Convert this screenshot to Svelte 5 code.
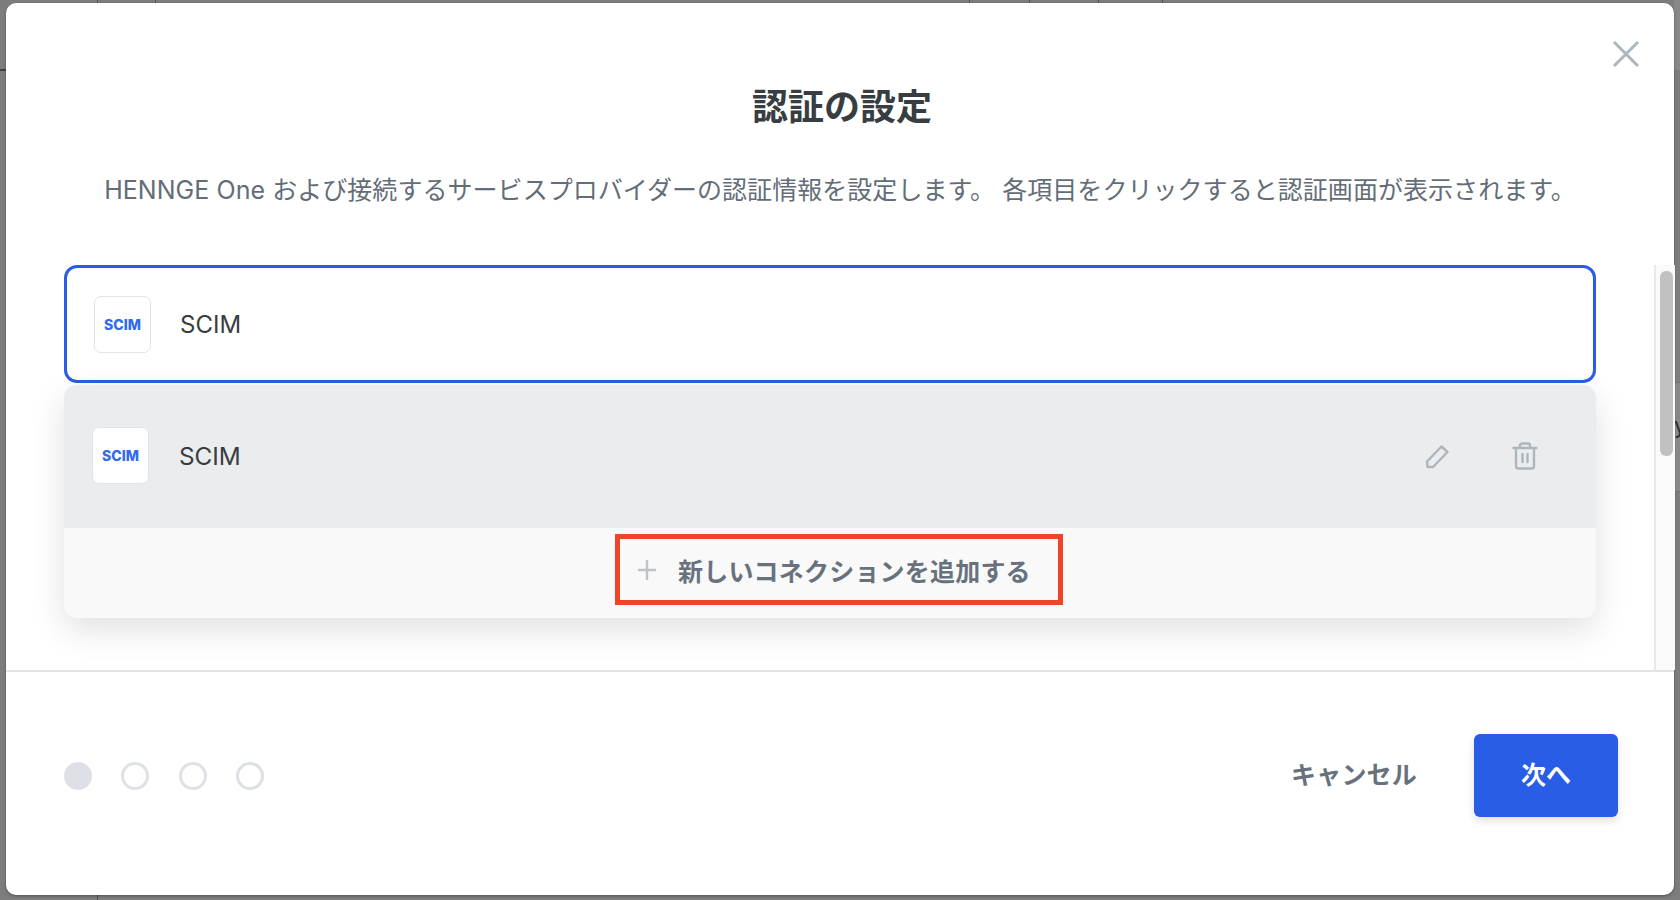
<script lang="ts">
  const dots = [true, false, false, false]
  const ticks = [97, 155, 969, 1029, 1098, 1162]
</script>

<div class="page">
  <div class="backdrop" aria-hidden="true">
    <span class="bg-line bg-line--left"></span>
    {#each ticks as x}
      <span class="bg-tick" style="left: {x}px"></span>
    {/each}
    <span class="bg-tick bg-tick--bottom"></span>
    <span class="bg-edge bg-edge--top"></span>
    <span class="bg-edge bg-edge--mid"><span class="bg-glyph">y</span></span>
  </div>

  <div class="modal" role="dialog" aria-label="認証の設定">
    <button class="close" type="button" aria-label="閉じる">
      <svg width="26" height="26" viewBox="0 0 26 26" fill="none" stroke="currentColor" stroke-width="3">
        <path d="M1 1L25 25M25 1L1 25" />
      </svg>
    </button>

    <header class="head">
      <h1 class="title">認証の設定</h1>
      <p class="desc">HENNGE One および接続するサービスプロバイダーの認証情報を設定します。 各項目をクリックすると認証画面が表示されます。</p>
    </header>

    <div class="body">
      <div class="content">
        <div class="select">
          <span class="logo">SCIM</span>
          <span class="name">SCIM</span>
        </div>

        <div class="menu">
          <div class="menu__row">
            <span class="logo">SCIM</span>
            <span class="name name--row">SCIM</span>
            <div class="menu__actions">
              <svg class="icon" width="26" height="26" viewBox="0 0 26 26" fill="none" stroke="currentColor" stroke-width="2.4" stroke-linejoin="round">
                <path d="M3 18.5L17.5 3.5L23.5 9L9 24H3.5Z" />
              </svg>
              <svg class="icon" width="26" height="28" viewBox="0 0 26 28" fill="none" stroke="currentColor" stroke-width="2.4" stroke-linecap="round" stroke-linejoin="round">
                <path d="M1.5 6H24.5M8 6V3.5C8 2.4 8.9 1.5 10 1.5H16C17.1 1.5 18 2.4 18 3.5V6M4 6V24C4 25.4 5 26.5 6.4 26.5H19.6C21 26.5 22 25.4 22 24V6M10.5 12V20M15.5 12V20" />
              </svg>
            </div>
          </div>
          <div class="menu__foot">
            <div class="add">
              <svg class="add__plus" width="18" height="20" viewBox="0 0 18 20" fill="none" stroke="currentColor" stroke-width="2.4">
                <path d="M9 0V20M0 10H18" />
              </svg>
              <span>新しいコネクションを追加する</span>
            </div>
          </div>
        </div>
      </div>

      <div class="scrollbar"><div class="scrollbar__thumb"></div></div>
    </div>

    <footer class="foot">
      <div class="dots">
        {#each dots as active}
          <span class="dot" class:dot--active={active}></span>
        {/each}
      </div>
      <div class="actions">
        <button class="btn-cancel" type="button">キャンセル</button>
        <button class="btn-next" type="button">次へ</button>
      </div>
    </footer>
  </div>
</div>

<style>
  :global(body) {
    margin: 0;
    background: #808080;
  }

  .page {
    position: relative;
    box-sizing: border-box;
    height: 900px;
    overflow: hidden;
    padding: 3px 6px 5px;
    background: #7d7d7d;
    font-family: Inter, "Noto Sans CJK JP", sans-serif;
  }

  .backdrop {
    position: absolute;
    inset: 0;
  }

  .bg-line {
    position: absolute;
    background: #404040;
  }

  .bg-line--left {
    left: 0;
    top: 69px;
    width: 6px;
    height: 2px;
  }

  .bg-tick {
    position: absolute;
    top: 0;
    width: 1px;
    height: 3px;
    background: #555;
  }

  .bg-tick--bottom {
    top: auto;
    bottom: 0;
    left: 97px;
    height: 5px;
  }

  .bg-edge {
    position: absolute;
    right: 0;
    width: 6px;
    overflow: hidden;
    background: #888;
  }

  .bg-edge--top {
    top: 0;
    height: 70px;
  }

  .bg-edge--mid {
    top: 382px;
    height: 108px;
    border-top: 1px solid #707070;
    border-bottom: 1px solid #707070;
  }

  .bg-glyph {
    position: absolute;
    left: 0;
    top: 30px;
    font-size: 22px;
    line-height: 24px;
    color: #2c2c2c;
  }

  .modal {
    position: relative;
    box-sizing: border-box;
    height: 892px;
    display: flex;
    flex-direction: column;
    background: #fff;
    border-radius: 10px;
    box-shadow: 0 1px 3px rgba(0, 0, 0, 0.35);
  }

  .close {
    position: absolute;
    right: 35px;
    top: 38px;
    padding: 0;
    border: 0;
    background: none;
    color: #aeb6bd;
    line-height: 0;
  }

  .head {
    height: 262px;
    flex: none;
    box-sizing: border-box;
    padding-top: 80px;
    text-align: center;
  }

  .title {
    margin: 0;
    padding-left: 4px;
    font-size: 36px;
    line-height: 48px;
    font-weight: 700;
    color: #383d42;
  }

  .desc {
    margin: 41px 0 0;
    font-size: 25px;
    line-height: 36px;
    letter-spacing: 0.05px;
    color: #636d78;
    white-space: nowrap;
  }

  .body {
    flex: none;
    height: 405px;
    display: flex;
    border-bottom: 2px solid #e2e4e7;
  }

  .content {
    flex: 1;
    padding: 0 58px;
    min-width: 0;
    overflow: hidden;
  }

  .select {
    box-sizing: border-box;
    height: 118px;
    display: flex;
    align-items: center;
    padding-left: 27px;
    border: 3px solid #2a5de3;
    border-radius: 13px;
  }

  .logo {
    box-sizing: border-box;
    flex: none;
    width: 57px;
    height: 57px;
    display: flex;
    align-items: center;
    justify-content: center;
    background: #fff;
    border: 1px solid #e2e4e7;
    border-radius: 7px;
    font-size: 14px;
    font-weight: 800;
    color: #2e6bf0;
  }

  .name {
    margin-left: 29px;
    font-size: 24px;
    color: #383d42;
  }

  .name--row {
    margin-left: 30px;
    font-size: 24.3px;
  }

  .menu {
    margin-top: 2px;
    height: 233px;
    display: flex;
    flex-direction: column;
    border-radius: 13px;
    background: #f9f9f9;
    box-shadow: 0 12px 34px rgba(0, 0, 0, 0.12);
    overflow: hidden;
  }

  .menu__row {
    height: 141px;
    flex: none;
    display: flex;
    align-items: center;
    padding: 0 58px 2px 28px;
    background: #ebecee;
  }

  .menu__actions {
    margin-left: auto;
    display: flex;
    align-items: center;
    gap: 62px;
    color: #aeb6bd;
  }

  .menu__foot {
    flex: 1;
    display: flex;
    justify-content: center;
    align-items: flex-start;
    padding: 6px 0 0 18px;
  }

  .add {
    box-sizing: border-box;
    width: 448px;
    height: 71px;
    display: flex;
    align-items: center;
    padding: 1px 0 0 18px;
    border: 5px solid #ee4527;
    font-size: 25px;
    letter-spacing: 0.2px;
    font-weight: 700;
    color: #68727d;
  }

  .add__plus {
    color: #bcc3ca;
    margin-right: 22px;
    flex: none;
  }

  .scrollbar {
    flex: none;
    box-sizing: border-box;
    width: 21px;
    margin-right: -1px;
    padding: 6px 2px 0 4px;
    background: #fafafa;
    border-left: 2px solid #e9e9e9;
  }

  .scrollbar__thumb {
    height: 185px;
    background: #c1c1c1;
    border-radius: 6px;
  }

  .foot {
    flex: 1;
    display: flex;
    align-items: center;
    justify-content: space-between;
    padding: 0 56px 16px 58px;
  }

  .dots {
    display: flex;
    gap: 29.4px;
  }

  .dot {
    box-sizing: border-box;
    width: 28px;
    height: 28px;
    border: 3px solid #dde1e5;
    border-radius: 50%;
  }

  .dot--active {
    background: #dde1e5;
  }

  .actions {
    display: flex;
    align-items: center;
    gap: 57px;
  }

  .btn-cancel,
  .btn-next {
    padding: 0 0 5px;
    border: 0;
    background: none;
    font-family: inherit;
    font-size: 25px;
    font-weight: 700;
  }

  .btn-cancel {
    color: #68727d;
    letter-spacing: 0.2px;
  }

  .btn-next {
    width: 144px;
    height: 83px;
    border-radius: 6px;
    background: #2a5de6;
    color: #fff;
    box-shadow: 0 4px 8px rgba(0, 0, 0, 0.12);
  }
</style>
